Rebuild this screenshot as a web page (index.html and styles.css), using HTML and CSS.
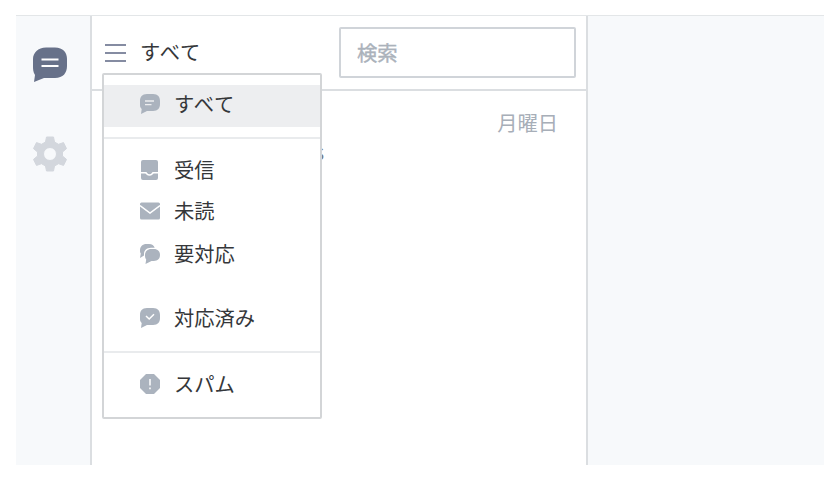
FILE: index.html
```html
<!DOCTYPE html>
<html lang="ja">

<head>
    <meta charset="UTF-8">
    <meta name="viewport" content="width=device-width, initial-scale=1.0">
    <title>すべて</title>
    <link rel="stylesheet" href="styles.css">
</head>

<body>
    <div class="app">
        <nav class="sidebar">
            <svg class="nav-chat" width="36" height="36" viewBox="0 0 36 36">
                <path fill="#677189" d="M14 .5h9c8 0 12 5 12 11.5v7c0 7-4 12-12 12H12L2 35 3 28C1 25 1 22 1 19v-7C1 6 6 .5 14 .5z" />
                <path stroke="#fff" stroke-width="2.2" d="M9.5 12.5h17M9.5 19h17" />
            </svg>
            <svg class="nav-gear" width="36" height="36" viewBox="0 0 36 36">
                <path fill="#d3d7dd" stroke="#d3d7dd" stroke-linejoin="round" fill-rule="evenodd" d="M14.5 1h7l1 5 4 2.3 5-1.7 3 6-4 3.4v4l4 3.4-3 6-5-1.7-4 2.3-1 5h-7l-1-5-4-2.3-5 1.7-3-6 4-3.4v-4l-4-3.4 3-6 5 1.7 4-2.3zM18 11.5a6.500 6.500 0 1 0 0 13 6.500 6.500 0 0 0 0-13z" />
            </svg>
        </nav>

        <main class="inbox">
            <header class="inbox-header">
                <button class="filter-button" type="button">
                    <svg width="21" height="18" viewBox="0 0 21 18">
                        <path stroke="#858ca2" stroke-width="2" d="M0 1h21M0 9h21M0 17h21" />
                    </svg>
                    <span class="kana">すべて</span>
                </button>
                <input class="search" type="text" placeholder="検索">

                <div class="menu">
                    <div class="menu-item active">
                        <svg width="20" height="20" viewBox="0 0 20 20">
                            <path fill="#abb3be" d="M7 0h6c5 0 7 3 7 7v3c0 4-2 7-7 7H7l-6 3 .7-5C0 13.5 0 12 0 10V7c0-4 2-7 7-7z" />
                            <path stroke="#edeef0" stroke-width="1.4" d="M5 7h9M5 10.6h6.5" />
                        </svg>
                        <span class="kana">すべて</span>
                    </div>
                    <hr>
                    <div class="menu-item">
                        <svg width="20" height="20" viewBox="0 0 20 20">
                            <path fill="#abb3be" d="M3 0h13a2 2 0 0 1 2 2v10h-5c-1 0-1.5 2.3-3.5 2.3S7 12 6 12H1V2a2 2 0 0 1 2-2z" />
                            <path fill="#abb3be" d="M1 13.5h4c1 0 2 2.3 4.5 2.3s3.5-2.3 4.5-2.3h4V18a2 2 0 0 1-2 2H3a2 2 0 0 1-2-2z" />
                        </svg>
                        <span>受信</span>
                    </div>
                    <div class="menu-item unread">
                        <svg width="20" height="20" viewBox="0 0 20 20">
                            <rect fill="#abb3be" y="1.5" width="20" height="17" rx="1.5" />
                            <path fill="none" stroke="#fff" stroke-width="1.5" d="M0 4.5l10 7.5L20 4.5" />
                        </svg>
                        <span>未読</span>
                    </div>
                    <div class="menu-item">
                        <svg width="20" height="20" viewBox="0 0 20 20">
                            <path fill="#abb3be" d="M6.5 0H9c3 0 5 1.5 5.7 3.7H11C6.5 3.7 4 6.5 4 10v1.5L0 14l.8-4.5C0 8.5 0 7.5 0 6.5 0 2.5 2.5 0 6.5 0z" />
                            <path fill="#abb3be" d="M11.3 5h2.5c4 0 6.2 2.5 6.2 5.8 0 4-2.2 6.2-6.2 6.2h-2.3L5.5 20l.7-4.6c-1-1.4-1.2-2.7-1.2-4.2C5 7.5 7.5 5 11.3 5z" />
                        </svg>
                        <span>要対応</span>
                    </div>
                    <div class="menu-item done">
                        <svg width="20" height="20" viewBox="0 0 20 20">
                            <path fill="#abb3be" d="M7 0h6c5 0 7 3 7 7v3c0 4-2 7-7 7H7l-6 3 .7-5C0 13.5 0 12 0 10V7c0-4 2-7 7-7z" />
                            <path fill="none" stroke="#fff" stroke-width="1.5" d="M6 8l3.2 3L14 6.3" />
                        </svg>
                        <span>対応済み</span>
                    </div>
                    <hr>
                    <div class="menu-item">
                        <svg width="20" height="20" viewBox="0 0 20 20">
                            <path fill="#abb3be" d="M6 0h8l6 6v8l-6 6H6l-6-6V6z" />
                            <path stroke="#fff" stroke-width="1.5" d="M10 5v6.5M10 13.5v1.7" />
                        </svg>
                        <span>スパム</span>
                    </div>
                </div>
            </header>

            <article class="conversation">
                <time>月曜日</time>
                <p class="preview">s</p>
            </article>
        </main>
    </div>
</body>

</html>
```
FILE: styles.css
```css
* {
    box-sizing: border-box;
}

body {
    margin: 0;
    padding: 15px 16px 35px;
    background-color: #fff;
    color: #35373a;
    font-family: "Noto Sans CJK JP", sans-serif;
    font-size: 20.3px;
}

svg {
    display: block;
    flex: none;
}

.app {
    display: flex;
    width: 808px;
    height: 450px;
    border-top: 1px solid #e3e6e8;
    background-color: #f7f9fb;
}

.sidebar {
    width: 74px;
    padding: 31px 0 0 16px;
}

.nav-gear {
    margin-top: 53px;
}

.inbox {
    width: 498px;
    border: solid #dbdee1;
    border-width: 0 2px;
    background-color: #fff;
}

.inbox-header {
    position: relative;
    display: flex;
    align-items: center;
    justify-content: space-between;
    height: 75px;
    padding: 0 10px 0 13px;
    border-bottom: 2px solid #dbdee1;
}

.filter-button {
    display: flex;
    align-items: center;
    gap: 14px;
    padding: 0;
    border: 0;
    background: none;
    color: inherit;
    font: inherit;
}

.filter-button span {
    padding-bottom: 3px;
}

.kana {
    letter-spacing: 0.8px;
}

.search {
    width: 237px;
    height: 51px;
    padding: 0 16px 2px;
    border: 2px solid #d0d4d9;
    border-radius: 2px;
    font: inherit;
}

.search::placeholder {
    color: #abb2bb;
    -webkit-text-stroke: 0.4px #abb2bb;
}

.menu {
    position: absolute;
    top: 57px;
    left: 10px;
    width: 220px;
    height: 346px;
    padding-top: 10px;
    border: 2px solid #d3d5d7;
    border-radius: 2px;
    background-color: #fff;
}

.menu hr {
    height: 2px;
    margin: 10px 0 12px;
    border: 0;
    background-color: #e9ebed;
}

.menu-item {
    display: flex;
    align-items: center;
    gap: 14px;
    height: 42px;
    padding: 0 0 4px 36px;
}

.menu-item span {
    padding-bottom: 2px;
}

.menu-item.active {
    background-color: #edeef0;
}

.menu-item.unread {
    padding-bottom: 6px;
}

.menu-item.done {
    margin-top: 22px;
}

.conversation {
    padding: 15px 28px 0 0;
}

.conversation time {
    display: block;
    color: #a7aeb8;
    line-height: 32px;
    text-align: right;
}

.preview {
    width: 232px;
    margin: 0;
    color: #777a7e;
    font-size: 21px;
    line-height: 27px;
    text-align: right;
}
```
